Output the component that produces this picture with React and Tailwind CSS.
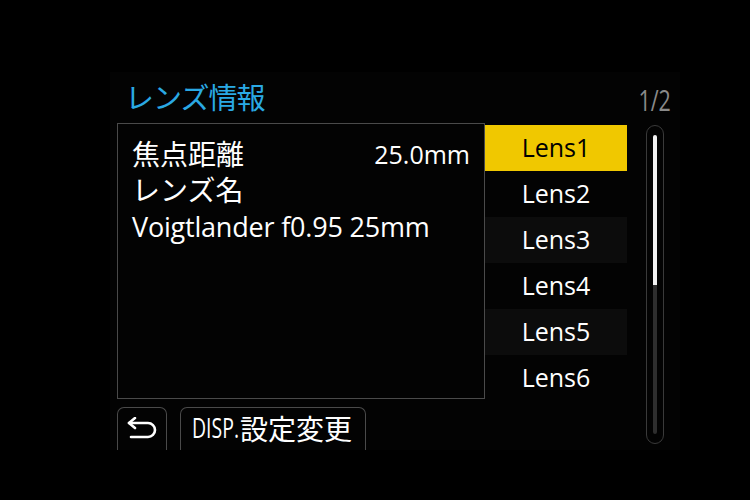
import React from "react";

const lenses = ["Lens1", "Lens2", "Lens3", "Lens4", "Lens5", "Lens6"];

const font = { fontFamily: '"Open Sans", "Noto Sans CJK JP", sans-serif' };

export default function App() {
  return (
    <div className="w-[750px] h-[500px] bg-black overflow-hidden" style={font}>
      <div className="ml-[110px] pt-[72px]">
        <div className="w-[570px] h-[378px] bg-[#030303] pl-[7px]">
          {/* header */}
          <div className="h-[51px] flex items-center justify-between pr-[9px]">
            <div className="pl-[8px] text-[29px] leading-none text-[#2aa9e4] tracking-[-1px]">
              レンズ情報
            </div>
            <div className="text-[29px] leading-none text-[#8a8a8a] scale-x-[0.74] origin-right mt-[3px]">
              1/2
            </div>
          </div>

          <div className="flex">
            {/* left column */}
            <div className="w-[368px]">
              <div className="h-[276px] border border-[#4a4a4a] pl-[14px] pr-[14px] pt-[12px] text-white">
                <div className="flex items-center justify-between h-[36px]">
                  <span className="text-[28px] leading-none">焦点距離</span>
                  <span className="text-[25px] leading-none">25.0mm</span>
                </div>
                <div className="h-[36px] flex items-center text-[28px] leading-none">
                  レンズ名
                </div>
                <div className="h-[36px] flex items-center text-[27px] leading-none tracking-[-0.2px]">
                  Voigtlander f0.95 25mm
                </div>
              </div>
              <div className="flex gap-[13px] mt-[8px]">
                <div className="w-[50px] h-[43px] border border-b-0 border-[#4a4a4a] rounded-t-[7px] flex items-center justify-center">
                  <svg width="34" height="24" viewBox="0 0 34 24" fill="none" stroke="white" strokeWidth="2.6" strokeLinecap="round" strokeLinejoin="round">
                    <path d="M4 6 H23 a7 7 0 0 1 0 14 H6" />
                    <path d="M10 1 L4 6 L10 11" />
                  </svg>
                </div>
                <div className="w-[186px] h-[43px] border border-b-0 border-[#4a4a4a] rounded-t-[7px] flex items-center pl-[11px] text-white whitespace-nowrap">
                  <span className="w-[48px] inline-block">
                    <span className="text-[27px] leading-none inline-block origin-left scale-x-[0.72]">
                      DISP.
                    </span>
                  </span>
                  <span className="text-[28px] leading-none">設定変更</span>
                </div>
              </div>
            </div>

            {/* list */}
            <div className="w-[142px] mt-[2px]">
              {lenses.map((l, i) => (
                <div
                  key={l}
                  className={
                    "h-[46px] flex items-center justify-center text-[25px] leading-none pb-[2px] " +
                    (i === 0
                      ? "bg-[#f0c800] text-black"
                      : i % 2 === 0
                      ? "bg-[#0c0c0c] text-white"
                      : "text-white")
                  }
                >
                  {l}
                </div>
              ))}
            </div>

            {/* scrollbar */}
            <div className="ml-[19px] mt-[2px] w-[18px] h-[319px] rounded-full border border-[#3a3a3a] flex flex-col items-center pt-[9px] pb-[9px]">
              <div className="w-[4px] h-[150px] bg-[#f2f2f2] rounded-t-full" />
              <div className="w-[4px] flex-1 bg-[#2e2e2e] rounded-b-full" />
            </div>
          </div>
        </div>
      </div>
    </div>
  );
}
